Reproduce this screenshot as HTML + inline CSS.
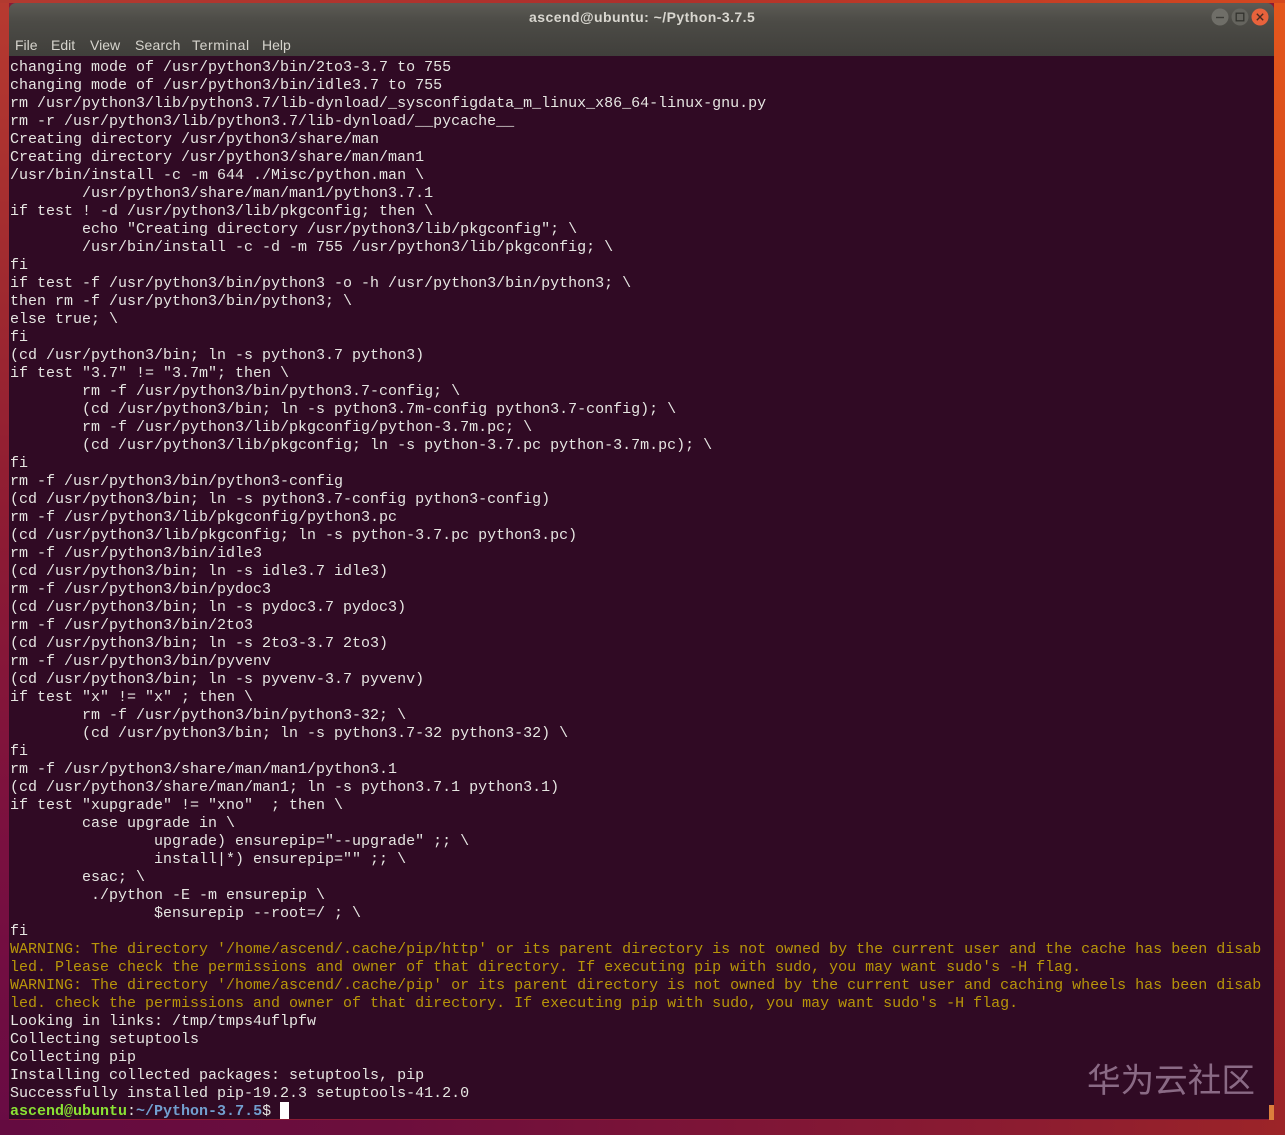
<!DOCTYPE html>
<html><head><meta charset="utf-8"><style>
html,body{margin:0;padding:0;width:1285px;height:1135px;overflow:hidden}
body{position:relative;background:#8a1a35}
#bgl{position:absolute;left:0;top:0;width:9px;height:1135px;background:linear-gradient(180deg,#b73a30 0%,#a02a30 25%,#8f1c33 45%,#7a1040 75%,#680b44 100%)}
#bgb{position:absolute;left:0;top:1120px;width:1285px;height:15px;background:linear-gradient(90deg,#640b40 0%,#6c0e3c 30%,#7c1437 55%,#8c1c30 80%,#9c2428 100%)}
#bgr{position:absolute;left:1274px;top:0;width:11px;height:1120px;background:linear-gradient(180deg,#e4571c 0%,#d5481c 25%,#c03a20 45%,#a82a25 70%,#9c2428 100%)}
#bgt{position:absolute;left:0;top:0;width:1285px;height:3px;background:linear-gradient(90deg,#b23a30,#ad2f2c 50%,#d4481f)}
#head{position:absolute;left:9px;top:3px;width:1265px;height:53px;background:linear-gradient(180deg,#5c5b55 0,#4c4b46 35%,#403f3b 100%);border-radius:7px 7px 0 0}
#term{position:absolute;left:9px;top:56px;width:1265px;height:1063px;background:#300a24}
pre{position:absolute;left:10px;top:59px;margin:0;font:15px/18px "Liberation Mono",monospace;color:#e6e6e2;white-space:pre}
.w{color:#b8960a}.g{color:#8ae234;font-weight:bold}.b{color:#729fcf;font-weight:bold}
#cur{position:absolute;left:280px;top:1102px;width:9px;height:17px;background:#fff}
#title{position:absolute;left:529px;top:8px;width:226px;text-align:center;font:bold 14px/18px "Liberation Sans",sans-serif;color:#d9d7d0;white-space:nowrap;letter-spacing:.45px}
.m{position:absolute;top:37px;font:14px/17px "Liberation Sans",sans-serif;color:#d6d4cd;white-space:nowrap}
#wm{position:absolute;left:1087px;top:1055px;font:33.6px/46px "Noto Sans CJK SC",sans-serif;color:#8a6a85;white-space:nowrap;font-weight:400}
#sb{position:absolute;left:1269px;top:1105px;width:5px;height:15px;background:#dc7f3c}
svg{position:absolute;left:1205px;top:2px}
</style></head><body>
<div id="bgl"></div><div id="bgb"></div><div id="bgr"></div><div id="bgt"></div>
<div id="head"></div><div id="term"></div>
<div id="title">ascend@ubuntu: ~/Python-3.7.5</div>
<svg width="70" height="30" viewBox="0 0 70 30">
<circle cx="15" cy="15" r="8.5" fill="#6f6e68"/><path d="M11 15.5h8" stroke="#3c3b37" stroke-width="1.4"/>
<circle cx="35" cy="15" r="8.5" fill="#65645e"/><rect x="31.2" y="11.2" width="7.6" height="7.6" fill="none" stroke="#33322e" stroke-width="1.3"/>
<circle cx="55" cy="15" r="8.5" fill="#e8623c"/><path d="M51.8 11.8l6.4 6.4M58.2 11.8l-6.4 6.4" stroke="#4a2a20" stroke-width="1.4"/>
</svg>
<span class="m" style="left:15px">File</span><span class="m" style="left:51px">Edit</span><span class="m" style="left:90px">View</span><span class="m" style="left:135px;letter-spacing:.2px">Search</span><span class="m" style="left:192px;letter-spacing:.6px">Terminal</span><span class="m" style="left:262px">Help</span>
<pre>changing mode of /usr/python3/bin/2to3-3.7 to 755
changing mode of /usr/python3/bin/idle3.7 to 755
rm /usr/python3/lib/python3.7/lib-dynload/_sysconfigdata_m_linux_x86_64-linux-gnu.py
rm -r /usr/python3/lib/python3.7/lib-dynload/__pycache__
Creating directory /usr/python3/share/man
Creating directory /usr/python3/share/man/man1
/usr/bin/install -c -m 644 ./Misc/python.man \
        /usr/python3/share/man/man1/python3.7.1
if test ! -d /usr/python3/lib/pkgconfig; then \
        echo "Creating directory /usr/python3/lib/pkgconfig"; \
        /usr/bin/install -c -d -m 755 /usr/python3/lib/pkgconfig; \
fi
if test -f /usr/python3/bin/python3 -o -h /usr/python3/bin/python3; \
then rm -f /usr/python3/bin/python3; \
else true; \
fi
(cd /usr/python3/bin; ln -s python3.7 python3)
if test "3.7" != "3.7m"; then \
        rm -f /usr/python3/bin/python3.7-config; \
        (cd /usr/python3/bin; ln -s python3.7m-config python3.7-config); \
        rm -f /usr/python3/lib/pkgconfig/python-3.7m.pc; \
        (cd /usr/python3/lib/pkgconfig; ln -s python-3.7.pc python-3.7m.pc); \
fi
rm -f /usr/python3/bin/python3-config
(cd /usr/python3/bin; ln -s python3.7-config python3-config)
rm -f /usr/python3/lib/pkgconfig/python3.pc
(cd /usr/python3/lib/pkgconfig; ln -s python-3.7.pc python3.pc)
rm -f /usr/python3/bin/idle3
(cd /usr/python3/bin; ln -s idle3.7 idle3)
rm -f /usr/python3/bin/pydoc3
(cd /usr/python3/bin; ln -s pydoc3.7 pydoc3)
rm -f /usr/python3/bin/2to3
(cd /usr/python3/bin; ln -s 2to3-3.7 2to3)
rm -f /usr/python3/bin/pyvenv
(cd /usr/python3/bin; ln -s pyvenv-3.7 pyvenv)
if test "x" != "x" ; then \
        rm -f /usr/python3/bin/python3-32; \
        (cd /usr/python3/bin; ln -s python3.7-32 python3-32) \
fi
rm -f /usr/python3/share/man/man1/python3.1
(cd /usr/python3/share/man/man1; ln -s python3.7.1 python3.1)
if test "xupgrade" != "xno"  ; then \
        case upgrade in \
                upgrade) ensurepip="--upgrade" ;; \
                install|*) ensurepip="" ;; \
        esac; \
         ./python -E -m ensurepip \
                $ensurepip --root=/ ; \
fi
<span class="w">WARNING: The directory '/home/ascend/.cache/pip/http' or its parent directory is not owned by the current user and the cache has been disab
led. Please check the permissions and owner of that directory. If executing pip with sudo, you may want sudo's -H flag.
WARNING: The directory '/home/ascend/.cache/pip' or its parent directory is not owned by the current user and caching wheels has been disab
led. check the permissions and owner of that directory. If executing pip with sudo, you may want sudo's -H flag.</span>
Looking in links: /tmp/tmps4uflpfw
Collecting setuptools
Collecting pip
Installing collected packages: setuptools, pip
Successfully installed pip-19.2.3 setuptools-41.2.0
<span class="g">ascend@ubuntu</span>:<span class="b">~/Python-3.7.5</span>$ </pre>
<div id="cur"></div>
<div id="wm">华为云社区</div>
<div id="sb"></div>
</body></html>
